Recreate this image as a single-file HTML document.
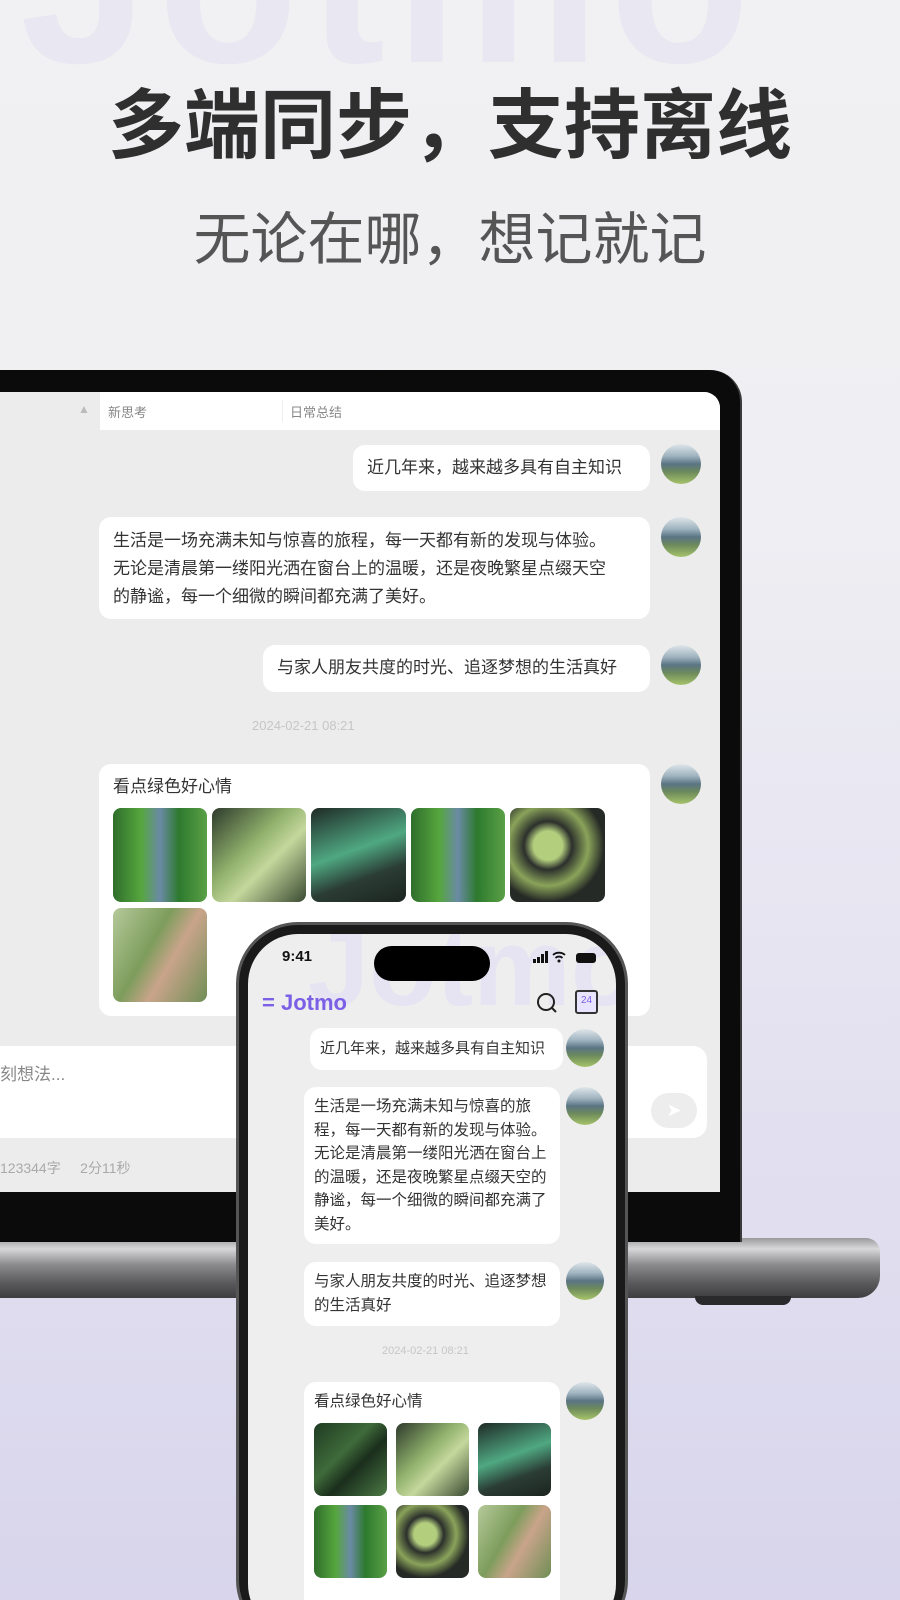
<!DOCTYPE html>
<html style="background:#d8d5ec"><head><meta charset="utf-8"><style>
*{margin:0;padding:0;box-sizing:border-box}
html,body{width:900px;height:1600px;overflow:hidden}
body{position:relative;font-family:"Liberation Sans","Noto Sans CJK SC",sans-serif;background:linear-gradient(180deg,#f1f1f3 0%,#efeff3 30%,#e6e4f1 60%,#d8d5ec 100%)}
.abs{position:absolute}
.wm{left:20px;top:-150px;font-size:230px;font-weight:bold;color:#e8e7f2;letter-spacing:10px}
.t1{left:0;width:900px;top:82px;text-align:center;font-size:76px;font-weight:bold;color:#2f2f2f;line-height:90px}
.t2{left:0;width:900px;top:205px;text-align:center;font-size:57px;color:#555;line-height:70px}
.bub{position:absolute;background:#fff;border-radius:12px;color:#333;font-size:17px;line-height:28px;padding:9px 14px;white-space:nowrap}
.av{position:absolute;width:40px;height:40px;border-radius:50%;background:linear-gradient(180deg,#dfe6ea 0%,#9fb3bf 30%,#5a7484 50%,#6d8a5c 70%,#a6c36a 100%)}
.img{position:absolute;border-radius:8px}
.g1{background:linear-gradient(90deg,#2f6e2c,#56a63e 30%,#6a8aa5 50%,#2d7a2e 70%,#5aa046)}
.g2{background:linear-gradient(135deg,#2e3a2c,#8fb06b 40%,#c4d79c 60%,#3a4a32)}
.g3{background:linear-gradient(160deg,#1f2a26,#4fa882 45%,#2b3d35 70%,#1c2420)}
.g4{background:radial-gradient(circle at 40% 40%,#b3cf7e 0 18%,#2c302c 30%,#8aa35a 50%,#262a26 70%)}
.g5{background:linear-gradient(120deg,#b5c99a,#7d9d5c 40%,#c9a48a 60%,#6f8e55)}
.g6{background:linear-gradient(135deg,#1e3a22,#3f6b3a 40%,#1a2e1c 60%,#4c7a45)}
.pb{font-size:15.5px;line-height:23.5px;padding:8px 10px}
</style></head><body>
<div class="abs wm">Jotmo</div>
<div class="abs t1">多端同步，支持离线</div>
<div class="abs t2">无论在哪，想记就记</div>

<div class="abs" style="left:0;top:1238px;width:880px;height:60px;border-radius:0 14px 22px 0;background:linear-gradient(180deg,#9a9a9c 0%,#d8d8da 18%,#8a8a8c 45%,#5a5a5c 75%,#3e3e40 100%)"></div>
<div class="abs" style="left:695px;top:1296px;width:96px;height:9px;border-radius:0 0 8px 8px;background:#2a2a2c"></div>
<div class="abs" style="left:-40px;top:370px;width:782px;height:872px;background:#0b0b0b;border-radius:0 32px 0 0;border-right:2px solid #3a3a3a"></div>
<div class="abs" style="left:0;top:392px;width:720px;height:800px;background:#ececec;border-radius:0 16px 0 0;overflow:hidden">
  <div class="abs" style="left:100px;top:0;width:620px;height:38px;background:#fff"></div>
  <div class="abs" style="left:78px;top:10px;font-size:12px;color:#bbb">▲</div>
  <div class="abs" style="left:108px;top:10px;font-size:13px;color:#888">新思考</div>
  <div class="abs" style="left:282px;top:8px;width:1px;height:22px;background:#eee"></div>
  <div class="abs" style="left:290px;top:10px;font-size:13px;color:#888">日常总结</div>
</div>
<div class="bub" style="left:353px;top:445px;width:297px;height:46px;">近几年来，越来越多具有自主知识</div>
<div class="av" style="left:661px;top:444px"></div>
<div class="bub" style="left:99px;top:517px;width:551px;height:102px;padding:10px 14px">生活是一场充满未知与惊喜的旅程，每一天都有新的发现与体验。<br>无论是清晨第一缕阳光洒在窗台上的温暖，还是夜晚繁星点缀天空<br>的静谧，每一个细微的瞬间都充满了美好。</div>
<div class="av" style="left:661px;top:517px"></div>
<div class="bub" style="left:263px;top:645px;width:387px;height:47px;">与家人朋友共度的时光、追逐梦想的生活真好</div>
<div class="av" style="left:661px;top:645px"></div>
<div class="abs" style="left:252px;top:718px;font-size:13px;color:#c6c6c6">2024-02-21 08:21</div>
<div class="bub" style="left:99px;top:764px;width:551px;height:252px;">看点绿色好心情</div>
<div class="av" style="left:661px;top:764px"></div>
<div class="img g1" style="left:113px;top:808px;width:94px;height:94px"></div>
<div class="img g2" style="left:212px;top:808px;width:94px;height:94px"></div>
<div class="img g3" style="left:311px;top:808px;width:95px;height:94px"></div>
<div class="img g1" style="left:411px;top:808px;width:94px;height:94px"></div>
<div class="img g4" style="left:510px;top:808px;width:95px;height:94px"></div>
<div class="img g5" style="left:113px;top:908px;width:94px;height:94px"></div>
<div class="abs" style="left:0;top:1046px;width:707px;height:92px;background:#fff;border-radius:0 14px 14px 0"></div>
<div class="abs" style="left:0;top:1060px;font-size:17px;color:#888">刻想法...</div>
<div class="abs" style="left:651px;top:1093px;width:46px;height:35px;border-radius:18px;background:#ededed;color:#fff;font-size:18px;text-align:center;line-height:35px">➤</div>
<div class="abs" style="left:0;top:1158px;font-size:14px;color:#aaa">123344字&nbsp;&nbsp;&nbsp;&nbsp;&nbsp;2分11秒</div>

<div class="abs" style="left:236px;top:922px;width:392px;height:720px;border-radius:62px;background:#1a1a1a;border:3px solid #555"></div>
<div class="abs" style="left:248px;top:934px;width:368px;height:700px;border-radius:50px;background:#eeeeee;overflow:hidden">
  <div class="abs" style="left:60px;top:-30px;font-size:110px;font-weight:bold;color:#e6e4f2">Jotmo</div>
  <div class="abs" style="left:34px;top:14px;font-size:15px;font-weight:bold;color:#111">9:41</div>
  <div class="abs" style="left:126px;top:12px;width:116px;height:35px;border-radius:18px;background:#000"></div>
  <svg class="abs" style="left:285px;top:17px" width="40" height="12" viewBox="0 0 40 12"><rect x="0" y="8" width="3" height="4" fill="#111"/><rect x="4" y="6" width="3" height="6" fill="#111"/><rect x="8" y="3" width="3" height="9" fill="#111"/><rect x="12" y="0" width="3" height="12" fill="#111"/><path d="M20 4a9 9 0 0 1 12 0M22.5 7a5 5 0 0 1 7 0" stroke="#111" stroke-width="1.8" fill="none"/><circle cx="26" cy="10" r="1.5" fill="#111"/></svg>
  <div class="abs" style="left:328px;top:19px;width:20px;height:10px;border-radius:3px;background:#111"></div>
  <div class="abs" style="left:14px;top:56px;font-size:22px;color:#7b5fe6;font-weight:bold">=&nbsp;Jotmo</div>
  <svg class="abs" style="left:288px;top:58px" width="22" height="22" viewBox="0 0 22 22"><circle cx="10" cy="10" r="8" fill="none" stroke="#222" stroke-width="2"/><path d="M16 16l4 4" stroke="#222" stroke-width="2"/></svg>
  <div class="abs" style="left:327px;top:56px;width:23px;height:24px;border:2px solid #333;border-radius:3px;font-size:10px;color:#7b5fe6;text-align:center;line-height:18px;background:#e8e4ff">24</div>
</div>
<div class="bub pb" style="left:310px;top:1028px;width:253px;height:42px;line-height:26px;font-size:15px">近几年来，越来越多具有自主知识</div>
<div class="av" style="left:566px;top:1029px;width:38px;height:38px"></div>
<div class="bub pb" style="left:304px;top:1087px;width:256px;height:157px;">生活是一场充满未知与惊喜的旅<br>程，每一天都有新的发现与体验。<br>无论是清晨第一缕阳光洒在窗台上<br>的温暖，还是夜晚繁星点缀天空的<br>静谧，每一个细微的瞬间都充满了<br>美好。</div>
<div class="av" style="left:566px;top:1087px;width:38px;height:38px"></div>
<div class="bub pb" style="left:304px;top:1262px;width:256px;height:64px;">与家人朋友共度的时光、追逐梦想<br>的生活真好</div>
<div class="av" style="left:566px;top:1262px;width:38px;height:38px"></div>
<div class="abs" style="left:382px;top:1345px;font-size:11px;color:#c6c6c6">2024-02-21 08:21</div>
<div class="bub pb" style="left:304px;top:1382px;width:256px;height:240px;">看点绿色好心情</div>
<div class="av" style="left:566px;top:1382px;width:38px;height:38px"></div>
<div class="img g6" style="left:314px;top:1423px;width:73px;height:73px"></div>
<div class="img g2" style="left:396px;top:1423px;width:73px;height:73px"></div>
<div class="img g3" style="left:478px;top:1423px;width:73px;height:73px"></div>
<div class="img g1" style="left:314px;top:1505px;width:73px;height:73px"></div>
<div class="img g4" style="left:396px;top:1505px;width:73px;height:73px"></div>
<div class="img g5" style="left:478px;top:1505px;width:73px;height:73px"></div>
</body></html>
